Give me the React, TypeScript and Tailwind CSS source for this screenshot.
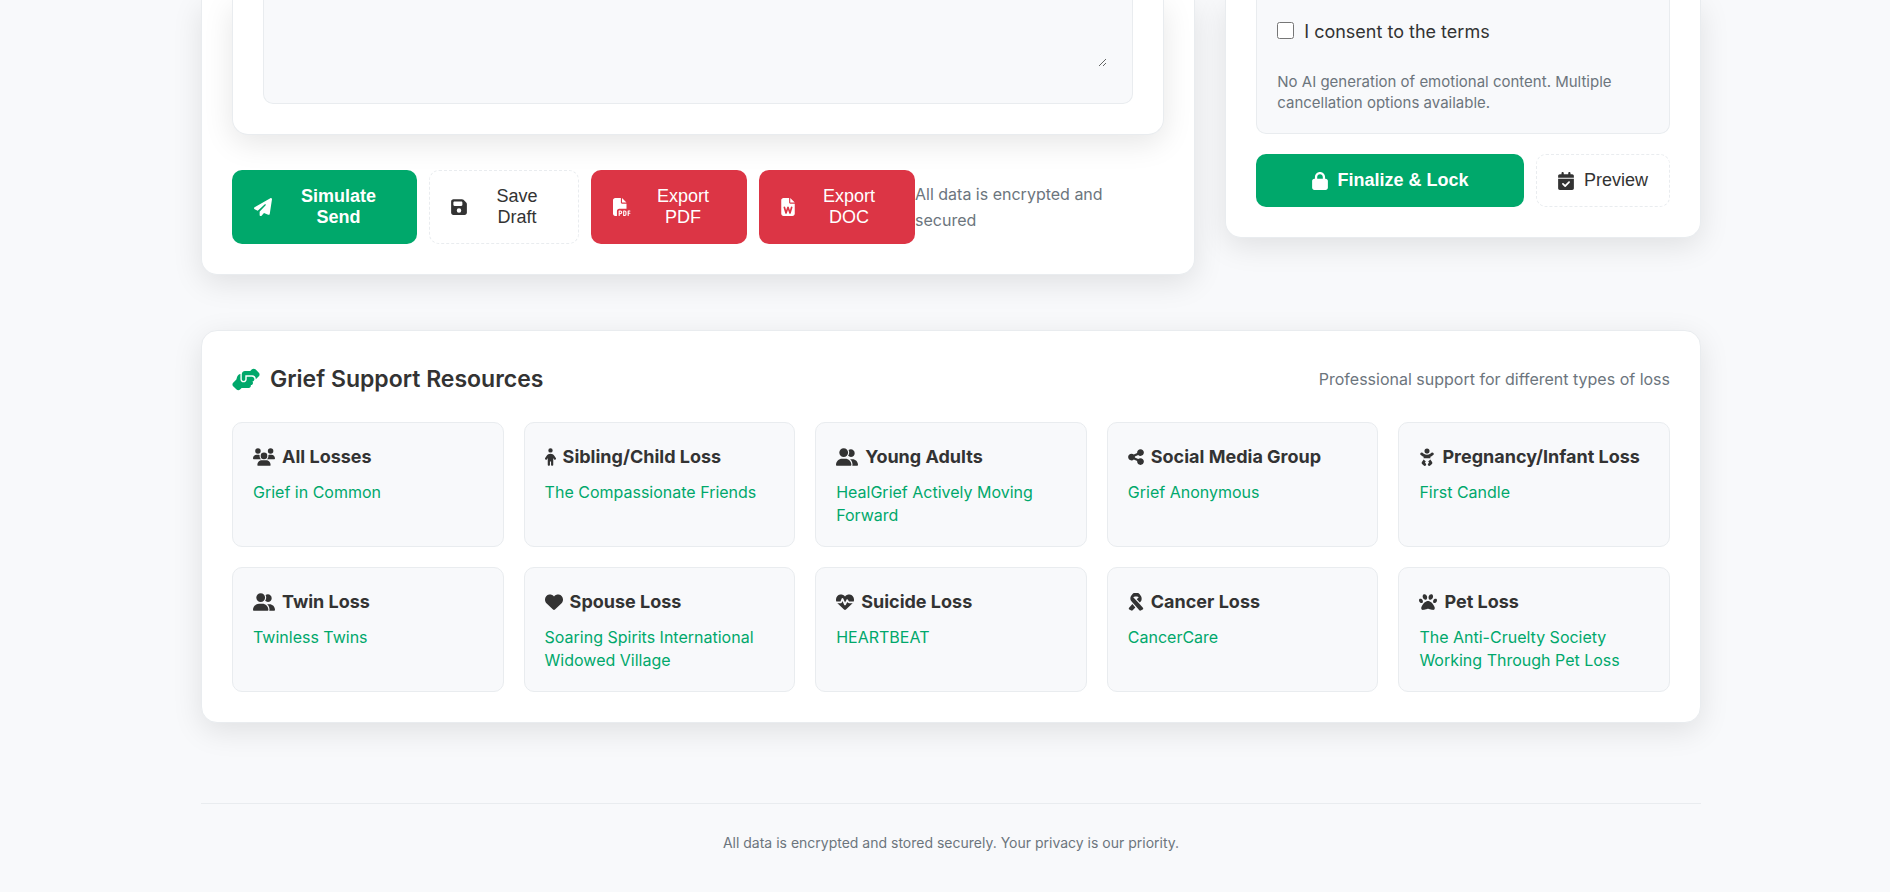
import type { ReactNode } from 'react';
import type { IconType } from 'react-icons';
import {
  FaBaby,
  FaCalendarCheck,
  FaChild,
  FaFilePdf,
  FaFileWord,
  FaFloppyDisk,
  FaHandshakeAngle,
  FaHeart,
  FaHeartPulse,
  FaLock,
  FaPaperPlane,
  FaPaw,
  FaRibbon,
  FaShareNodes,
  FaUserGroup,
  FaUsers,
} from 'react-icons/fa6';

type Resource = { title: string; icon: IconType; iconWidth: string; links: string[] };

const resources: Resource[] = [
  { title: 'All Losses', icon: FaUsers, iconWidth: 'w-[22px]', links: ['Grief in Common'] },
  { title: 'Sibling/Child Loss', icon: FaChild, iconWidth: 'w-[11px]', links: ['The Compassionate Friends'] },
  { title: 'Young Adults', icon: FaUserGroup, iconWidth: 'w-[22px]', links: ['HealGrief Actively Moving Forward'] },
  { title: 'Social Media Group', icon: FaShareNodes, iconWidth: 'w-4', links: ['Grief Anonymous'] },
  { title: 'Pregnancy/Infant Loss', icon: FaBaby, iconWidth: 'w-4', links: ['First Candle'] },
  { title: 'Twin Loss', icon: FaUserGroup, iconWidth: 'w-[22px]', links: ['Twinless Twins'] },
  {
    title: 'Spouse Loss',
    icon: FaHeart,
    iconWidth: 'w-[18px]',
    links: ['Soaring Spirits International', 'Widowed Village'],
  },
  { title: 'Suicide Loss', icon: FaHeartPulse, iconWidth: 'w-[18px]', links: ['HEARTBEAT'] },
  { title: 'Cancer Loss', icon: FaRibbon, iconWidth: 'w-4', links: ['CancerCare'] },
  {
    title: 'Pet Loss',
    icon: FaPaw,
    iconWidth: 'w-[18px]',
    links: ['The Anti-Cruelty Society', 'Working Through Pet Loss'],
  },
];

const variants = {
  primary: 'border-transparent bg-[#00a86b] font-bold text-white',
  outline: 'border-dashed border-[#e9ecef] bg-white text-[#333333]',
  danger: 'border-transparent bg-[#dc3545] text-white',
};

function ActionButton({
  variant,
  icon: Icon,
  iconWidth,
  className = '',
  labelClass = '',
  children,
}: {
  variant: keyof typeof variants;
  icon: IconType;
  iconWidth: string;
  className?: string;
  labelClass?: string;
  children: ReactNode;
}) {
  return (
    <button
      type="button"
      className={`flex items-center justify-center gap-[10px] rounded-[10px] border px-[21px] py-[15px] font-['Liberation_Sans',Arial,sans-serif] text-[18px] leading-[21px] ${variants[variant]} ${className}`}
    >
      <Icon className={`h-[18px] shrink-0 ${iconWidth}`} />
      <span className={labelClass}>{children}</span>
    </button>
  );
}

const shadow = 'shadow-[0_8px_30px_rgba(0,0,0,0.1)]';

export default function App() {
  return (
    <div className="min-h-screen bg-[#f8f9fb] pl-3 font-['Inter',sans-serif] text-[#333333]">
      <div className="mx-auto max-w-[1500px]">
        <main>
          <div className="grid grid-cols-[2.09fr_1fr] items-start gap-[30px]">
            <section className={`rounded-b-2xl border border-t-0 border-[#e9ecef] bg-white px-[30px] pb-[30px] ${shadow}`}>
              <div className={`rounded-b-2xl border border-t-0 border-[#e9ecef] bg-white px-[30px] pb-[30px] ${shadow}`}>
                <div className="rounded-b-[10px] border border-t-0 border-[#e9ecef] bg-[#f8f9fb] px-[25px] pb-9">
                  <textarea aria-label="Message" className="block h-[67px] w-full resize bg-transparent outline-none" />
                </div>
              </div>
              <div className="mt-[35px] flex items-center justify-between">
                <div className="flex shrink-0 gap-3">
                  <ActionButton
                    variant="primary"
                    icon={FaPaperPlane}
                    iconWidth="w-[18px]"
                    className="w-[185px]"
                    labelClass="flex-1"
                  >
                    Simulate Send
                  </ActionButton>
                  <ActionButton
                    variant="outline"
                    icon={FaFloppyDisk}
                    iconWidth="w-4"
                    className="w-[150px]"
                    labelClass="flex-1"
                  >
                    Save Draft
                  </ActionButton>
                  <ActionButton
                    variant="danger"
                    icon={FaFilePdf}
                    iconWidth="w-[18px]"
                    className="w-[156px]"
                    labelClass="flex-1"
                  >
                    Export PDF
                  </ActionButton>
                  <ActionButton
                    variant="danger"
                    icon={FaFileWord}
                    iconWidth="w-[14px]"
                    className="w-[156px]"
                    labelClass="flex-1"
                  >
                    Export DOC
                  </ActionButton>
                </div>
                <p className="text-[16px] leading-[26px] text-[#6c757d]">All data is encrypted and secured</p>
              </div>
            </section>

            <aside className={`rounded-b-2xl border border-t-0 border-[#e9ecef] bg-white px-[30px] pb-[30px] ${shadow}`}>
              <div className="rounded-b-[10px] border border-t-0 border-[#e9ecef] bg-[#f8f9fb] px-5 pt-[17px] pb-5">
                <label className="flex items-center gap-[10px] text-[18px] leading-[30px]">
                  <input type="checkbox" className="mb-[3px] size-[17px]" />
                  I consent to the terms
                </label>
                <p className="mt-6 text-[15px] leading-[21px] text-[#6c757d]">
                  No AI generation of emotional content. Multiple cancellation options available.
                </p>
              </div>
              <div className="mt-5 flex gap-3">
                <ActionButton variant="primary" icon={FaLock} iconWidth="w-4" className="flex-1">
                  Finalize &amp; Lock
                </ActionButton>
                <ActionButton variant="outline" icon={FaCalendarCheck} iconWidth="w-4">
                  Preview
                </ActionButton>
              </div>
            </aside>
          </div>

          <section className={`mt-[55px] rounded-2xl border border-[#e9ecef] bg-white px-[30px] py-[30px] ${shadow}`}>
            <header className="mb-[25px] flex items-center justify-between">
              <h2 className="flex items-center gap-[10px] text-[23px] leading-9 font-semibold">
                <FaHandshakeAngle className="h-[23px] w-7 text-[#00a86b]" />
                Grief Support Resources
              </h2>
              <p className="text-[16px] leading-[26px] text-[#6c757d]">Professional support for different types of loss</p>
            </header>
            <div className="grid grid-cols-5 gap-5">
              {resources.map(({ title, icon: Icon, iconWidth, links }) => (
                <article key={title} className="rounded-[10px] border border-[#e9ecef] bg-[#f8f9fb] px-5 pt-5 pb-[19px]">
                  <h3 className="mb-[10px] flex items-center gap-[7px] text-[18px] leading-[28px] font-bold">
                    <Icon className={`h-[18px] shrink-0 ${iconWidth}`} />
                    {title}
                  </h3>
                  {links.map((link) => (
                    <a key={link} href="#" className="block text-[16px] leading-[23px] text-[#00a86b]">
                      {link}
                    </a>
                  ))}
                </article>
              ))}
            </div>
          </section>
        </main>

        <footer className="mt-20 border-t border-[#e9ecef] py-[27px] text-center text-[14px] leading-6 text-[#6c757d]">
          All data is encrypted and stored securely. Your privacy is our priority.
        </footer>
      </div>
    </div>
  );
}
